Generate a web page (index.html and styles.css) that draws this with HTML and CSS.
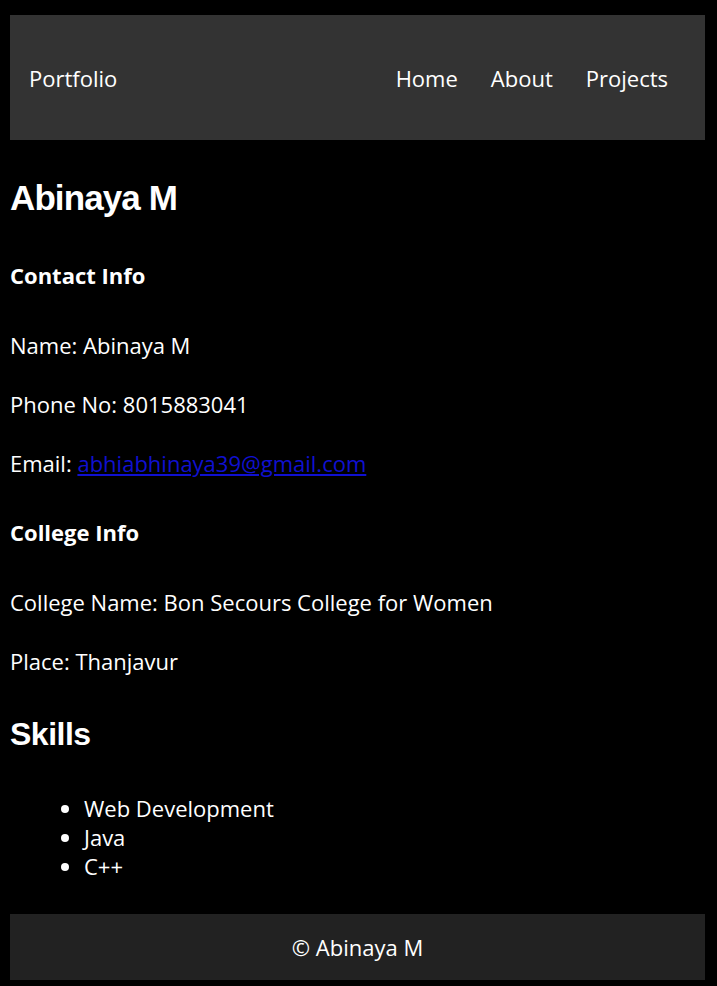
FILE: index.html
```html
<!DOCTYPE html>
<html lang="en">
<head>
<meta charset="utf-8">
<title>Portfolio</title>
<link rel="stylesheet" href="styles.css">
</head>
<body>
<header class="site-header">
  <div class="brand">Portfolio</div>
  <nav class="nav">
    <a href="#" class="nav-link">Home</a>
    <a href="#" class="nav-link">About</a>
    <a href="#" class="nav-link">Projects</a>
  </nav>
</header>
<main class="content">
  <h1 class="title">Abinaya M</h1>
  <h3 class="sub">Contact Info</h3>
  <p class="line">Name: Abinaya M</p>
  <p class="line">Phone No: 8015883041</p>
  <p class="line">Email: <a class="mail" href="#">abhiabhinaya39@gmail.com</a></p>
  <h3 class="sub sub-next">College Info</h3>
  <p class="line">College Name: Bon Secours College for Women</p>
  <p class="line">Place: Thanjavur</p>
  <h2 class="section">Skills</h2>
  <ul class="skills">
    <li>Web Development</li>
    <li>Java</li>
    <li>C++</li>
  </ul>
</main>
<footer class="site-footer">© Abinaya M</footer>
</body>
</html>
```
FILE: styles.css
```css
html, body {
  background: #000;
}
body {
  margin: 15px 12px 6px 10px;
  color: #fff;
  font-family: "Open Sans", "DejaVu Sans", sans-serif;
  font-size: 22px;
  line-height: 30px;
}
.site-header {
  background: #333;
  height: 125px;
  display: flex;
  align-items: center;
  justify-content: space-between;
  padding: 0 37px 0 19px;
}
.brand {
  font-size: 22px;
}
.nav {
  display: flex;
  gap: 33px;
}
.nav-link {
  color: #fff;
  text-decoration: none;
  font-size: 22px;
}
.title {
  font-family: "Liberation Sans", Arial, sans-serif;
  font-size: 35px;
  letter-spacing: -0.9px;
  line-height: 48px;
  margin: 34px 0 38px;
  font-weight: 700;
}
.sub {
  font-size: 22px;
  line-height: 30px;
  margin: 0 0 40px;
  font-weight: 700;
}
.sub-next {
  margin-top: 39px;
}
.line {
  margin: 0 0 29px;
}
.mail {
  color: #1010d0;
}
.section {
  font-family: "Liberation Sans", Arial, sans-serif;
  font-size: 32px;
  letter-spacing: -0.5px;
  line-height: 40px;
  margin: 38px 0 40px;
  font-weight: 700;
}
.skills {
  margin: 0 0 33px;
  padding-left: 74px;
  line-height: 29px;
}
.site-footer {
  background: #222;
  height: 66px;
  display: flex;
  align-items: center;
  justify-content: center;
}
```
